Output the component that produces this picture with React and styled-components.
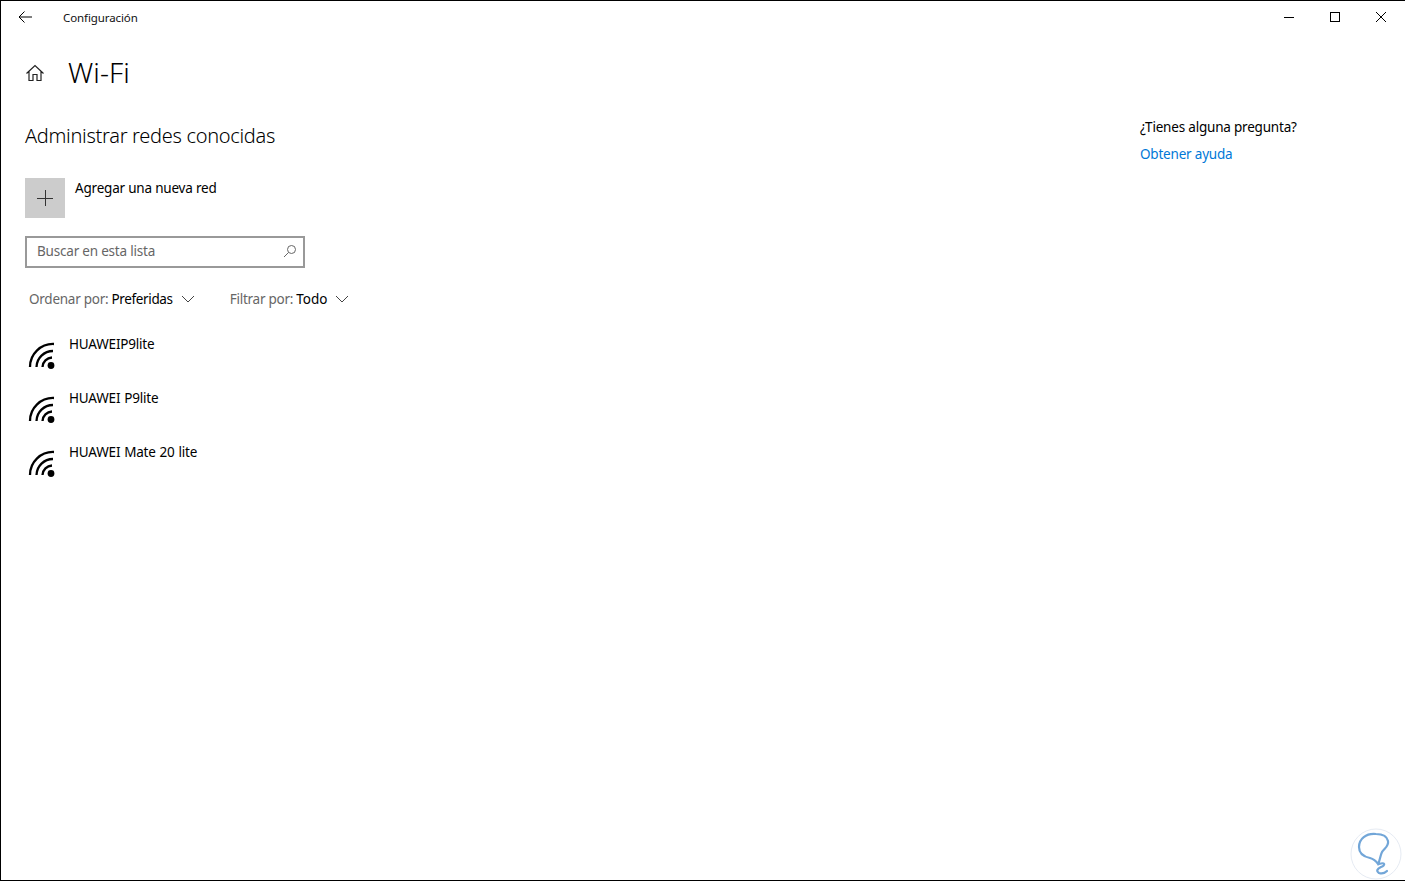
import React from 'react';
import styled, { createGlobalStyle } from 'styled-components';

const GlobalStyle = createGlobalStyle`
  html, body {
    margin: 0;
    padding: 0;
    background: #fff;
  }
  * {
    box-sizing: border-box;
  }
`;

const Window = styled.div`
  width: 1405px;
  height: 881px;
  border: 1px solid #000;
  border-right-width: 0;
  background: #fff;
  color: #000;
  font-family: 'Noto Sans', 'Open Sans', sans-serif;
  font-size: 14px;
  overflow: hidden;
  position: relative;
`;

const TitleBar = styled.div`
  height: 32px;
  display: flex;
  align-items: center;
`;

const BackButton = styled.div`
  width: 48px;
  padding-left: 17px;
  display: flex;
  align-items: center;
`;

const AppName = styled.span`
  margin-left: 14px;
  font-size: 11.5px;
  letter-spacing: -0.1px;
  color: #111;
`;

const Controls = styled.div`
  margin-left: auto;
  margin-right: 1px;
  display: flex;
`;

const Control = styled.div`
  width: 46px;
  height: 32px;
  display: flex;
  align-items: center;
  justify-content: center;
`;

const Header = styled.div`
  height: 48px;
  margin-top: 16px;
  padding-left: 24px;
  display: flex;
  align-items: center;
`;

const PageTitle = styled.h1`
  margin: 0 0 2px 23px;
  font-size: 28px;
  font-weight: 300;
  font-family: 'Noto Sans', sans-serif;
  letter-spacing: 0.1px;
`;

const Body = styled.div`
  display: flex;
  justify-content: space-between;
`;

const Content = styled.main`
  padding-left: 24px;
  width: 500px;
`;

const SectionTitle = styled.h2`
  margin: 25px 0 0;
  font-size: 20px;
  line-height: 28px;
  font-weight: 300;
  letter-spacing: -0.3px;
`;

const AddRow = styled.div`
  margin-top: 28px;
  display: flex;
  gap: 10px;
`;

const AddTile = styled.div`
  width: 40px;
  height: 40px;
  background: #cccccc;
  display: flex;
  align-items: center;
  justify-content: center;
`;

const AddLabel = styled.span`
  font-size: 13.5px;
  line-height: 20px;
  letter-spacing: -0.2px;
`;

const SearchBox = styled.div`
  margin-top: 18px;
  width: 280px;
  height: 32px;
  border: 2px solid #999;
  padding: 0 6px 2px 10px;
  display: flex;
  align-items: center;
  justify-content: space-between;
  color: #666;
  font-size: 13.5px;
  letter-spacing: -0.2px;
`;

const Filters = styled.div`
  margin-top: 21px;
  padding-left: 4px;
  display: flex;
  gap: 35px;
  height: 20px;
`;

const Filter = styled.div`
  display: flex;
  align-items: center;
  font-size: 13.5px;
  letter-spacing: -0.25px;
  color: #666;
`;

const FilterValue = styled.span`
  margin-left: 3px;
  margin-right: 8px;
  letter-spacing: ${(props) => props.$spacing};
  color: #000;
`;

const Networks = styled.ul`
  list-style: none;
  margin: 25px 0 0;
  padding: 0;
`;

const Network = styled.li`
  height: 54px;
  display: flex;
  padding-left: 3px;
`;

const NetworkIcon = styled.div`
  width: 41px;
  padding-top: 8px;
`;

const NetworkName = styled.span`
  font-size: 13.5px;
  line-height: 20px;
  letter-spacing: -0.2px;
  word-spacing: 0.6px;
`;

const Aside = styled.aside`
  width: 265px;
  margin-top: 20px;
`;

const Question = styled.div`
  font-size: 13.5px;
  line-height: 20px;
  letter-spacing: -0.2px;
`;

const HelpLink = styled.a`
  display: block;
  margin-top: 7px;
  font-size: 13.5px;
  line-height: 20px;
  letter-spacing: -0.2px;
  color: #0078d7;
`;

const Watermark = styled.div`
  position: absolute;
  right: 3px;
  bottom: 0;
  width: 52px;
  height: 52px;
`;

const WifiIcon = () => (
  <svg width="30" height="30" viewBox="0 0 30 30" fill="none" stroke="#000">
    <path d="M2 25 A23 23 0 0 1 26 2" strokeWidth="2.3" />
    <path d="M8.5 25 A16.5 16.5 0 0 1 25 9" strokeWidth="2.3" />
    <path d="M14.5 25 A10 10 0 0 1 24 15.5" strokeWidth="2.3" />
    <circle cx="23" cy="23.5" r="3.4" fill="#000" stroke="none" />
  </svg>
);

const Chevron = () => (
  <svg width="14" height="8" viewBox="0 0 14 8" fill="none" stroke="#444" strokeWidth="1">
    <path d="M1 1 L7 7 L13 1" />
  </svg>
);

function App() {
  return (
    <Window>
      <GlobalStyle />
      <TitleBar>
        <BackButton>
          <svg width="14" height="12" viewBox="0 0 14 12" fill="none" stroke="#000" strokeWidth="1">
            <path d="M1 6 H14 M6.5 .5 L1 6 L6.5 11.5" />
          </svg>
        </BackButton>
        <AppName>Configuración</AppName>
        <Controls>
          <Control>
            <svg width="10" height="10" viewBox="0 0 10 10" stroke="#000" strokeWidth="1">
              <path d="M0 5.5 H10" />
            </svg>
          </Control>
          <Control>
            <svg width="10" height="10" viewBox="0 0 10 10" fill="none" stroke="#000" strokeWidth="1">
              <rect x=".5" y=".5" width="9" height="9" />
            </svg>
          </Control>
          <Control>
            <svg width="10" height="10" viewBox="0 0 10 10" stroke="#000" strokeWidth="1">
              <path d="M0 0 L10 10 M10 0 L0 10" />
            </svg>
          </Control>
        </Controls>
      </TitleBar>

      <Header>
        <svg width="20" height="18" viewBox="0 0 20 18" fill="none" stroke="#222" strokeWidth="1.2">
          <path d="M1.5 9.5 L10 1.5 L18.5 9.5 M4 7.5 V16.5 H8 V10.5 H12 V16.5 H16 V7.5" />
        </svg>
        <PageTitle>Wi-Fi</PageTitle>
      </Header>

      <Body>
        <Content>
          <SectionTitle>Administrar redes conocidas</SectionTitle>
          <AddRow>
            <AddTile>
              <svg width="16" height="16" viewBox="0 0 16 16" stroke="#333" strokeWidth="1">
                <path d="M0 8.5 H16 M8.5 0 V16" />
              </svg>
            </AddTile>
            <AddLabel>Agregar una nueva red</AddLabel>
          </AddRow>
          <SearchBox>
            <span>Buscar en esta lista</span>
            <svg width="14" height="14" viewBox="0 0 14 14" fill="none" stroke="#666" strokeWidth="1">
              <circle cx="8.5" cy="5.5" r="4" />
              <path d="M5.5 8.5 L1 13" />
            </svg>
          </SearchBox>
          <Filters>
            <Filter>
              Ordenar por:<FilterValue $spacing="-0.35px">Preferidas</FilterValue>
              <Chevron />
            </Filter>
            <Filter>
              Filtrar por:<FilterValue $spacing="0">Todo</FilterValue>
              <Chevron />
            </Filter>
          </Filters>
          <Networks>
            {['HUAWEIP9lite', 'HUAWEI P9lite', 'HUAWEI Mate 20 lite'].map((name) => (
              <Network key={name}>
                <NetworkIcon>
                  <WifiIcon />
                </NetworkIcon>
                <NetworkName>{name}</NetworkName>
              </Network>
            ))}
          </Networks>
        </Content>
        <Aside>
          <Question>¿Tienes alguna pregunta?</Question>
          <HelpLink>Obtener ayuda</HelpLink>
        </Aside>
      </Body>

      <Watermark>
        <svg width="52" height="52" viewBox="0 0 52 52" fill="none">
          <circle cx="26" cy="26" r="25" fill="#fff" stroke="#e6ebf3" strokeWidth="1" />
          <path
            d="M26 6 C16 5 9 11 9 19 C9 26 15 29 20 30 C24 31 26 33 28 36 C30 33 30 28 32 24 C35 20 39 18 38 13 C37 8 32 6 26 6 Z M29 36 C35 34 36 37 31 39 C27 41 26 43 29 45 C32 46 35 45 37 43"
            stroke="#72a6d8"
            strokeWidth="2.2"
            strokeLinecap="round"
          />
        </svg>
      </Watermark>
    </Window>
  );
}

export default App;
